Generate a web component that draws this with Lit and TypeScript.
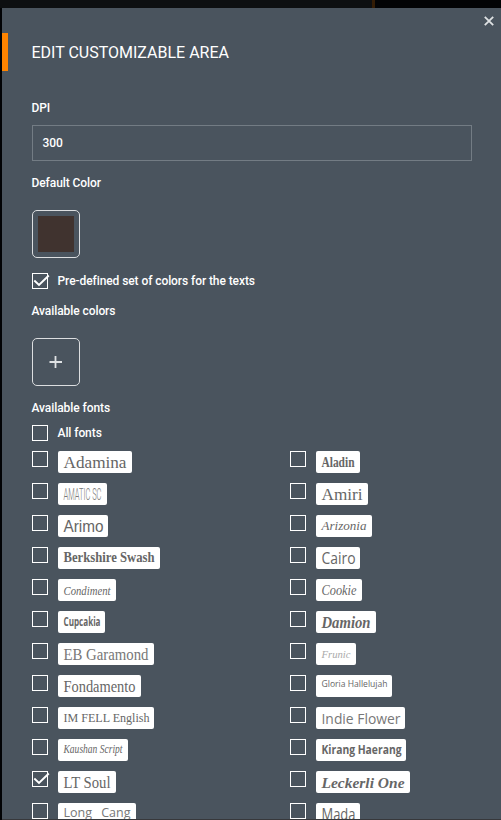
import { LitElement, html, css, svg, nothing } from "lit";
import { customElement, property } from "lit/decorators.js";

interface FontSample {
  name: string;
  width: number;
  length: number;
  size: number;
  baseline: number;
  look: string;
  checked?: boolean;
}

const f = (name: string, width: number, length: number, size: number, baseline: number, look: string, checked = false): FontSample =>
  ({ name, width, length, size, baseline, look, checked });

const FONTS: FontSample[] = [
  f("Adamina", 74, 63, 17, 17, "serif"),
  f("Aladin", 44, 33, 15, 16, "serif heavy"),
  f("AMATIC SC", 49, 38, 16.5, 17, "thin"),
  f("Amiri", 52, 41, 17, 17, "serif"),
  f("Arimo", 50, 40, 16, 17, "arial"),
  f("Arizonia", 56, 45, 12, 15, "serif slanted"),
  f("Berkshire Swash", 102, 91, 14, 15, "serif heavy"),
  f("Cairo", 44, 34, 16, 17, "sans"),
  f("Condiment", 58, 47, 13.5, 16, "serif slanted"),
  f("Cookie", 46, 35, 15.5, 16, "serif slanted"),
  f("Cupcakia", 47, 37, 11.5, 15, "sans heavy"),
  f("Damion", 60, 49, 16, 17, "serif slanted heavy"),
  f("EB Garamond", 96, 85, 16.5, 17, "serif light"),
  f("Frunic", 40, 29, 11, 15, "serif slanted faint"),
  f("Fondamento", 83, 72, 16, 17, "serif"),
  f("Gloria Hallelujah", 76, 66, 9.5, 12, "sans"),
  f("IM FELL English", 96, 86, 13.5, 15, "serif"),
  f("Indie Flower", 89, 79, 14, 17, "sans light"),
  f("Kaushan Script", 70, 59, 12, 14, "serif slanted"),
  f("Kirang Haerang", 90, 80, 11.5, 15, "sans heavy"),
  f("LT Soul", 58, 47, 16, 17, "serif", true),
  f("Leckerli One", 94, 83, 15, 17, "serif slanted heavy"),
  f("Long Cang", 78, 67, 12.5, 14, "sans light spaced"),
  f("Mada", 44, 34, 16, 17, "sans"),
];

@customElement("check-box")
class CheckBox extends LitElement {
  @property({ type: Boolean }) checked = false;

  static styles = css`
    :host { display: block; width: 16px; height: 16px; flex: none; }
    svg { display: block; overflow: visible; }
    .frame { fill: none; stroke: #fff; stroke-width: 1; }
    .tick { fill: none; stroke: #fff; stroke-width: 1.9; }
  `;

  render() {
    return html`<svg width="16" height="16" viewBox="0 0 16 16">
      <rect class="frame" x="0.5" y="0.5" width="15" height="15"></rect>
      ${this.checked ? svg`<path class="tick" d="M2.3 7.5 7 12 16.8 2.5"></path>` : nothing}
    </svg>`;
  }
}

@customElement("font-chip")
class FontChip extends LitElement {
  @property({ attribute: false }) font!: FontSample;

  static styles = css`
    :host { display: block; height: 22px; background: #fff; border-radius: 2px; }
    svg { display: block; overflow: visible; }
    text { fill: #666; }
    .serif { font-family: "Liberation Serif", serif; }
    .sans { font-family: "Open Sans", sans-serif; }
    .arial { font-family: "Liberation Sans", sans-serif; }
    .heavy { font-weight: 700; }
    .slanted { font-style: italic; }
    .spaced { word-spacing: 6px; }
    .light { fill: #777; }
    .thin { font-family: Roboto, sans-serif; font-weight: 300; fill: #777; }
    .faint { fill: #aaa; }
  `;

  render() {
    const s = this.font;
    return html`<svg width=${s.width} height="22">
      <text class=${s.look} x="5.5" y=${s.baseline} font-size=${s.size}
        textLength=${s.length} lengthAdjust="spacingAndGlyphs">${s.name}</text>
    </svg>`;
  }
}

@customElement("app-root")
class AppRoot extends LitElement {
  static styles = css`
    :host {
      display: block;
      box-sizing: border-box;
      height: 820px;
      overflow: hidden;
      padding: 8px 0 0 2px;
      background: linear-gradient(90deg, #0d0f11 372px, #331c05 372px 375px, #020305 375px) top / 100% 8px no-repeat, #020305;
      font: 500 12px/16px Roboto, sans-serif;
      letter-spacing: -0.08px;
      color: #fff;
    }
    .dialog {
      position: relative;
      box-sizing: border-box;
      height: 812px;
      overflow: hidden;
      background: #4a545e;
      border-bottom: 1px solid #37383b;
      padding-top: 25px;
    }
    .close { position: absolute; top: 8px; right: 7px; display: block; }
    .title {
      display: flex;
      align-items: center;
      height: 38px;
      box-sizing: border-box;
      margin: 0;
      border-left: 6px solid #ff8400;
      padding: 2px 0 0 23.5px;
      font-size: 16px;
      font-weight: 400;
      letter-spacing: 0;
    }
    .form { padding: 29px 29px 0 30px; }
    .label { display: block; height: 16px; margin-left: -0.5px; }
    .field {
      box-sizing: border-box;
      display: flex;
      align-items: center;
      height: 36px;
      margin: 9px 0 14px;
      padding: 0 9.5px;
      border: 1px solid #737c84;
    }
    .swatch {
      box-sizing: border-box;
      display: flex;
      align-items: center;
      justify-content: center;
      width: 48px;
      height: 48px;
      margin: 19px 0 15px;
      border: 1px solid #dcdee0;
      border-radius: 5px;
    }
    .swatch.add { margin-bottom: 14px; }
    .color { width: 36px; height: 36px; background: #40332f; }
    .option { display: flex; gap: 9.5px; height: 16px; }
    .option.colors { margin-bottom: 14px; }
    .option.all { margin: 9px 0 10px; }
    .fonts { display: grid; grid-template-columns: 258px 1fr; grid-auto-rows: 22px; row-gap: 10px; letter-spacing: 0; }
    .row { display: flex; gap: 10px; }
  `;

  render() {
    return html`<div class="dialog">
      <svg class="close" width="10" height="10" viewBox="0 0 10 10">
        <path d="M.8 .8 9.2 9.2M9.2 .8 .8 9.2" stroke="#dfe2e4" stroke-width="1.8"></path>
      </svg>
      <h1 class="title">EDIT CUSTOMIZABLE AREA</h1>
      <div class="form">
        <span class="label">DPI</span>
        <div class="field">300</div>
        <span class="label">Default Color</span>
        <div class="swatch"><div class="color"></div></div>
        <div class="option colors"><check-box checked></check-box><span>Pre-defined set of colors for the texts</span></div>
        <span class="label">Available colors</span>
        <div class="swatch add">
          <svg width="14" height="14" viewBox="0 0 14 14"><path d="M.5 7H13M6.5 1V13" stroke="#dfe2e4" stroke-width="1.8"></path></svg>
        </div>
        <span class="label">Available fonts</span>
        <div class="option all"><check-box></check-box><span>All fonts</span></div>
        <div class="fonts">
          ${FONTS.map((font) => html`<div class="row">
            <check-box ?checked=${font.checked}></check-box><font-chip .font=${font}></font-chip>
          </div>`)}
        </div>
      </div>
    </div>`;
  }
}
